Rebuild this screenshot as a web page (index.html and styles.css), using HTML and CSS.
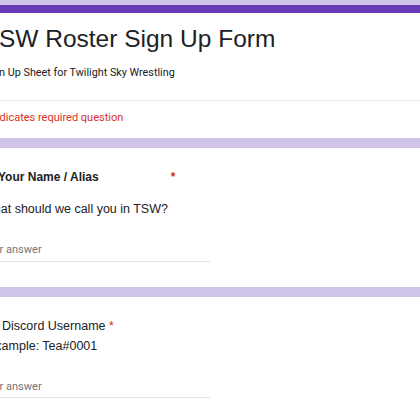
FILE: index.html
```html
<!DOCTYPE html>
<html>
<head>
<meta charset="utf-8">
<link rel="stylesheet" href="styles.css">
</head>
<body>
<div class="form">
  <section class="card header-card">
    <div class="header-main">
      <h1 class="title">TSW Roster Sign Up Form</h1>
      <p class="subtitle">Sign Up Sheet for Twilight Sky Wrestling</p>
    </div>
    <p class="required-note">* Indicates required question</p>
  </section>
  <section class="card question">
    <div class="q-title q-title-bold">Your Name / Alias<span class="star star-far">*</span></div>
    <div class="q-desc q-desc-1">What should we call you in TSW?</div>
    <div class="answer answer-1">Your answer</div>
  </section>
  <section class="card question">
    <div class="q-title q-title-plain">Discord Username <span class="star">*</span></div>
    <div class="q-desc q-desc-2">Example: Tea#0001</div>
    <div class="answer answer-2">Your answer</div>
  </section>
</div>
</body>
</html>
```
FILE: styles.css
```css
html, body {
  margin: 0;
  padding: 0;
  background: #d1c4e9;
}
body {
  padding-top: 5px;
  overflow: hidden;
  height: 420px;
}
.form {
  margin-left: -41px;
  width: 520px;
  display: flex;
  flex-direction: column;
  gap: 10px;
}
.card {
  background: #ffffff;
  padding-left: 24px;
}
.header-card {
  border-top: 8px solid #673ab7;
}
.header-main {
  padding-top: 12px;
  padding-bottom: 19px;
  border-bottom: 1px solid #e6e6e6;
  margin-left: -24px;
  padding-left: 24px;
}
.title {
  margin: 0 0 0 1px;
  font-family: "Liberation Sans", Arial, sans-serif;
  font-weight: 400;
  font-size: 24.5px;
  line-height: 28px;
  color: #202124;
}
.subtitle {
  margin: 12px 0 0 1px;
  font-family: Roboto, "Liberation Sans", sans-serif;
  font-size: 10.8px;
  line-height: 16px;
  color: #202124;
}
.required-note {
  margin: 0;
  padding: 9px 0 12px 0;
  font-family: Roboto, "Liberation Sans", sans-serif;
  font-size: 11px;
  line-height: 16px;
  color: #d93025;
}
.question {
  padding-top: 21px;
  padding-bottom: 25px;
}
.q-title {
  font-family: "Liberation Sans", Arial, sans-serif;
  line-height: 16px;
  color: #202124;
}
.q-title-bold {
  font-weight: 700;
  font-size: 12px;
  padding-left: 15px;
}
.q-title-plain {
  font-size: 12.5px;
  padding-left: 19px;
}
.star {
  color: #d93025;
}
.star-far {
  margin-left: 72px;
}
.q-desc {
  font-family: "Liberation Sans", Arial, sans-serif;
  font-size: 12.5px;
  line-height: 16px;
  color: #202124;
}
.q-desc-1 {
  margin-top: 16px;
  margin-left: -1px;
}
.q-desc-2 {
  margin-top: 4px;
  margin-left: 4px;
}
.answer {
  width: 229px;
  margin-top: 25px;
  margin-left: -2px;
  padding-bottom: 3px;
  border-bottom: 1px solid #e0e0e0;
  font-family: Roboto, "Liberation Sans", sans-serif;
  font-size: 11px;
  line-height: 16px;
  color: #70757a;
}
.answer-2 {
  padding-bottom: 2px;
}
```
